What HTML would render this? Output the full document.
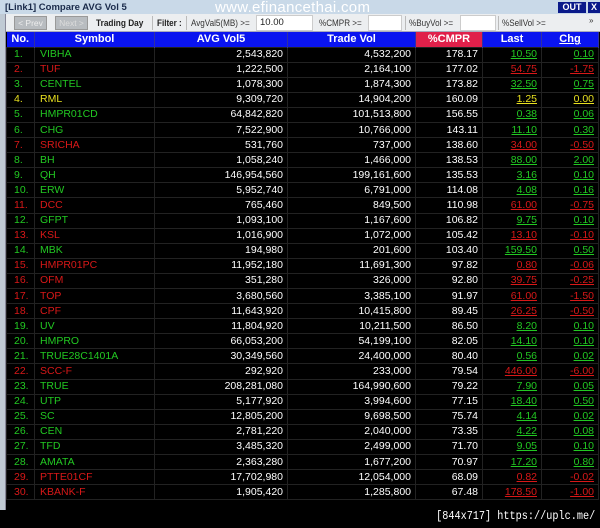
<!DOCTYPE html>
<html><head><meta charset="utf-8"><style>
*{margin:0;padding:0;box-sizing:border-box}
body{width:600px;height:528px;background:#000;position:relative;overflow:hidden;font-family:"Liberation Sans",sans-serif}
.a{position:absolute}
#title{left:0;top:0;width:600px;height:14px;background:#c9d9e8;font-size:9.5px;font-weight:bold;color:#1a2a4a;padding:2px 0 0 5px}
#wm{left:215px;top:-1px;font-size:15px;color:#fff;letter-spacing:.3px}
#out{left:558px;top:2px;width:28px;height:11px;background:#0a1a8a;color:#fff;font-size:9px;font-weight:bold;text-align:center;line-height:11px}
#x{left:588px;top:2px;width:12px;height:11px;background:#0a1a8a;color:#fff;font-size:9px;font-weight:bold;text-align:center;line-height:11px}
#tb{left:6px;top:14px;width:594px;height:18px;background:#eceef0;border-bottom:1px solid #aab}
.btn{top:16px;height:14px;background:#b8bcc0;border:1px solid #999;color:#eee;font-size:8.5px;text-align:center;line-height:12px}
.lbl{top:18px;font-size:9px;color:#333;white-space:nowrap;transform-origin:0 0}
.inp{top:15px;height:16px;background:#fff;border:1px solid #ccc;font-size:9.5px;color:#222;padding:1px 3px}
.sep{top:16px;width:1px;height:14px;background:#bbb}
#lb{left:0;top:14px;width:6px;height:496px;background:#c0cad4;border-right:1px solid #889}
table{position:absolute;left:6px;top:32px;width:592px;border-collapse:collapse;table-layout:fixed;font-size:10.5px}
th{height:15px;background:#0a14f0;color:#fff;font-weight:bold;font-size:11px;text-align:center;border-right:1px solid #3030a0}
td{height:15.1px;border:1px solid #222;color:#fff;text-align:right;padding:0 4px;white-space:nowrap;line-height:13px}
td.n{text-align:left;padding-left:7px}
td.s{text-align:left;padding-left:5px}
td u{text-decoration:underline}
.g{color:#22c822}.r{color:#d81818}.y{color:#e8e020}
</style></head><body>
<div class="a" id="title">[Link1] Compare AVG Vol 5</div>
<div class="a" id="wm">www.efinancethai.com</div>
<div class="a" id="out">OUT</div><div class="a" id="x">X</div>
<div class="a" id="tb"></div>
<div class="a" id="lb"></div>
<div class="a btn" style="left:14px;width:33px">&lt; Prev</div>
<div class="a btn" style="left:55px;width:33px;color:#ddd">Next &gt;</div>
<div class="a lbl" style="left:96px;font-weight:bold;color:#222;transform:scaleX(.92)">Trading Day</div>
<div class="a sep" style="left:152px"></div>
<div class="a lbl" style="left:157px;font-weight:bold;color:#222;transform:scaleX(.9)">Filter :</div>
<div class="a sep" style="left:186px"></div>
<div class="a lbl" style="left:191px;transform:scaleX(.9)">AvgVal5(MB) &gt;=</div>
<div class="a inp" style="left:256px;width:57px">10.00</div>
<div class="a lbl" style="left:319px;transform:scaleX(.9)">%CMPR &gt;=</div>
<div class="a inp" style="left:368px;width:34px"></div>
<div class="a sep" style="left:405px"></div>
<div class="a lbl" style="left:409px;transform:scaleX(.9)">%BuyVol &gt;=</div>
<div class="a inp" style="left:460px;width:36px"></div>
<div class="a sep" style="left:498px"></div>
<div class="a lbl" style="left:502px;transform:scaleX(.9)">%SellVol &gt;=</div>
<div class="a lbl" style="left:589px;font-size:8px;top:16px">»</div>
<table>
<colgroup><col style="width:28px"><col style="width:120px"><col style="width:133px"><col style="width:128px"><col style="width:67px"><col style="width:59px"><col style="width:57px"></colgroup>
<tr><th>No.</th><th>Symbol</th><th>AVG Vol5</th><th>Trade Vol</th><th style="background:#e0204a">%CMPR</th><th>Last</th><th><u>Chg</u></th></tr>
<tr><td class="n g">1.</td><td class="s g">VIBHA</td><td>2,543,820</td><td>4,532,200</td><td>178.17</td><td class="g"><u>10.50</u></td><td class="g"><u>0.10</u></td></tr>
<tr><td class="n r">2.</td><td class="s r">TUF</td><td>1,222,500</td><td>2,164,100</td><td>177.02</td><td class="r"><u>54.75</u></td><td class="r"><u>-1.75</u></td></tr>
<tr><td class="n g">3.</td><td class="s g">CENTEL</td><td>1,078,300</td><td>1,874,300</td><td>173.82</td><td class="g"><u>32.50</u></td><td class="g"><u>0.75</u></td></tr>
<tr><td class="n y">4.</td><td class="s y">RML</td><td>9,309,720</td><td>14,904,200</td><td>160.09</td><td class="y"><u>1.25</u></td><td class="y"><u>0.00</u></td></tr>
<tr><td class="n g">5.</td><td class="s g">HMPR01CD</td><td>64,842,820</td><td>101,513,800</td><td>156.55</td><td class="g"><u>0.38</u></td><td class="g"><u>0.06</u></td></tr>
<tr><td class="n g">6.</td><td class="s g">CHG</td><td>7,522,900</td><td>10,766,000</td><td>143.11</td><td class="g"><u>11.10</u></td><td class="g"><u>0.30</u></td></tr>
<tr><td class="n r">7.</td><td class="s r">SRICHA</td><td>531,760</td><td>737,000</td><td>138.60</td><td class="r"><u>34.00</u></td><td class="r"><u>-0.50</u></td></tr>
<tr><td class="n g">8.</td><td class="s g">BH</td><td>1,058,240</td><td>1,466,000</td><td>138.53</td><td class="g"><u>88.00</u></td><td class="g"><u>2.00</u></td></tr>
<tr><td class="n g">9.</td><td class="s g">QH</td><td>146,954,560</td><td>199,161,600</td><td>135.53</td><td class="g"><u>3.16</u></td><td class="g"><u>0.10</u></td></tr>
<tr><td class="n g">10.</td><td class="s g">ERW</td><td>5,952,740</td><td>6,791,000</td><td>114.08</td><td class="g"><u>4.08</u></td><td class="g"><u>0.16</u></td></tr>
<tr><td class="n r">11.</td><td class="s r">DCC</td><td>765,460</td><td>849,500</td><td>110.98</td><td class="r"><u>61.00</u></td><td class="r"><u>-0.75</u></td></tr>
<tr><td class="n g">12.</td><td class="s g">GFPT</td><td>1,093,100</td><td>1,167,600</td><td>106.82</td><td class="g"><u>9.75</u></td><td class="g"><u>0.10</u></td></tr>
<tr><td class="n r">13.</td><td class="s r">KSL</td><td>1,016,900</td><td>1,072,000</td><td>105.42</td><td class="r"><u>13.10</u></td><td class="r"><u>-0.10</u></td></tr>
<tr><td class="n g">14.</td><td class="s g">MBK</td><td>194,980</td><td>201,600</td><td>103.40</td><td class="g"><u>159.50</u></td><td class="g"><u>0.50</u></td></tr>
<tr><td class="n r">15.</td><td class="s r">HMPR01PC</td><td>11,952,180</td><td>11,691,300</td><td>97.82</td><td class="r"><u>0.80</u></td><td class="r"><u>-0.06</u></td></tr>
<tr><td class="n r">16.</td><td class="s r">OFM</td><td>351,280</td><td>326,000</td><td>92.80</td><td class="r"><u>39.75</u></td><td class="r"><u>-0.25</u></td></tr>
<tr><td class="n r">17.</td><td class="s r">TOP</td><td>3,680,560</td><td>3,385,100</td><td>91.97</td><td class="r"><u>61.00</u></td><td class="r"><u>-1.50</u></td></tr>
<tr><td class="n r">18.</td><td class="s r">CPF</td><td>11,643,920</td><td>10,415,800</td><td>89.45</td><td class="r"><u>26.25</u></td><td class="r"><u>-0.50</u></td></tr>
<tr><td class="n g">19.</td><td class="s g">UV</td><td>11,804,920</td><td>10,211,500</td><td>86.50</td><td class="g"><u>8.20</u></td><td class="g"><u>0.10</u></td></tr>
<tr><td class="n g">20.</td><td class="s g">HMPRO</td><td>66,053,200</td><td>54,199,100</td><td>82.05</td><td class="g"><u>14.10</u></td><td class="g"><u>0.10</u></td></tr>
<tr><td class="n g">21.</td><td class="s g">TRUE28C1401A</td><td>30,349,560</td><td>24,400,000</td><td>80.40</td><td class="g"><u>0.56</u></td><td class="g"><u>0.02</u></td></tr>
<tr><td class="n r">22.</td><td class="s r">SCC-F</td><td>292,920</td><td>233,000</td><td>79.54</td><td class="r"><u>446.00</u></td><td class="r"><u>-6.00</u></td></tr>
<tr><td class="n g">23.</td><td class="s g">TRUE</td><td>208,281,080</td><td>164,990,600</td><td>79.22</td><td class="g"><u>7.90</u></td><td class="g"><u>0.05</u></td></tr>
<tr><td class="n g">24.</td><td class="s g">UTP</td><td>5,177,920</td><td>3,994,600</td><td>77.15</td><td class="g"><u>18.40</u></td><td class="g"><u>0.50</u></td></tr>
<tr><td class="n g">25.</td><td class="s g">SC</td><td>12,805,200</td><td>9,698,500</td><td>75.74</td><td class="g"><u>4.14</u></td><td class="g"><u>0.02</u></td></tr>
<tr><td class="n g">26.</td><td class="s g">CEN</td><td>2,781,220</td><td>2,040,000</td><td>73.35</td><td class="g"><u>4.22</u></td><td class="g"><u>0.08</u></td></tr>
<tr><td class="n g">27.</td><td class="s g">TFD</td><td>3,485,320</td><td>2,499,000</td><td>71.70</td><td class="g"><u>9.05</u></td><td class="g"><u>0.10</u></td></tr>
<tr><td class="n g">28.</td><td class="s g">AMATA</td><td>2,363,280</td><td>1,677,200</td><td>70.97</td><td class="g"><u>17.20</u></td><td class="g"><u>0.80</u></td></tr>
<tr><td class="n r">29.</td><td class="s r">PTTE01CF</td><td>17,702,980</td><td>12,054,000</td><td>68.09</td><td class="r"><u>0.82</u></td><td class="r"><u>-0.02</u></td></tr>
<tr><td class="n r">30.</td><td class="s r">KBANK-F</td><td>1,905,420</td><td>1,285,800</td><td>67.48</td><td class="r"><u>178.50</u></td><td class="r"><u>-1.00</u></td></tr>
</table>
<div class="a" style="right:5px;top:509px;font-family:'Liberation Mono',monospace;font-size:12px;color:#fff;transform:scaleX(.85);transform-origin:100% 0;white-space:nowrap">[844x717] https://uplc.me/</div>
</body></html>
